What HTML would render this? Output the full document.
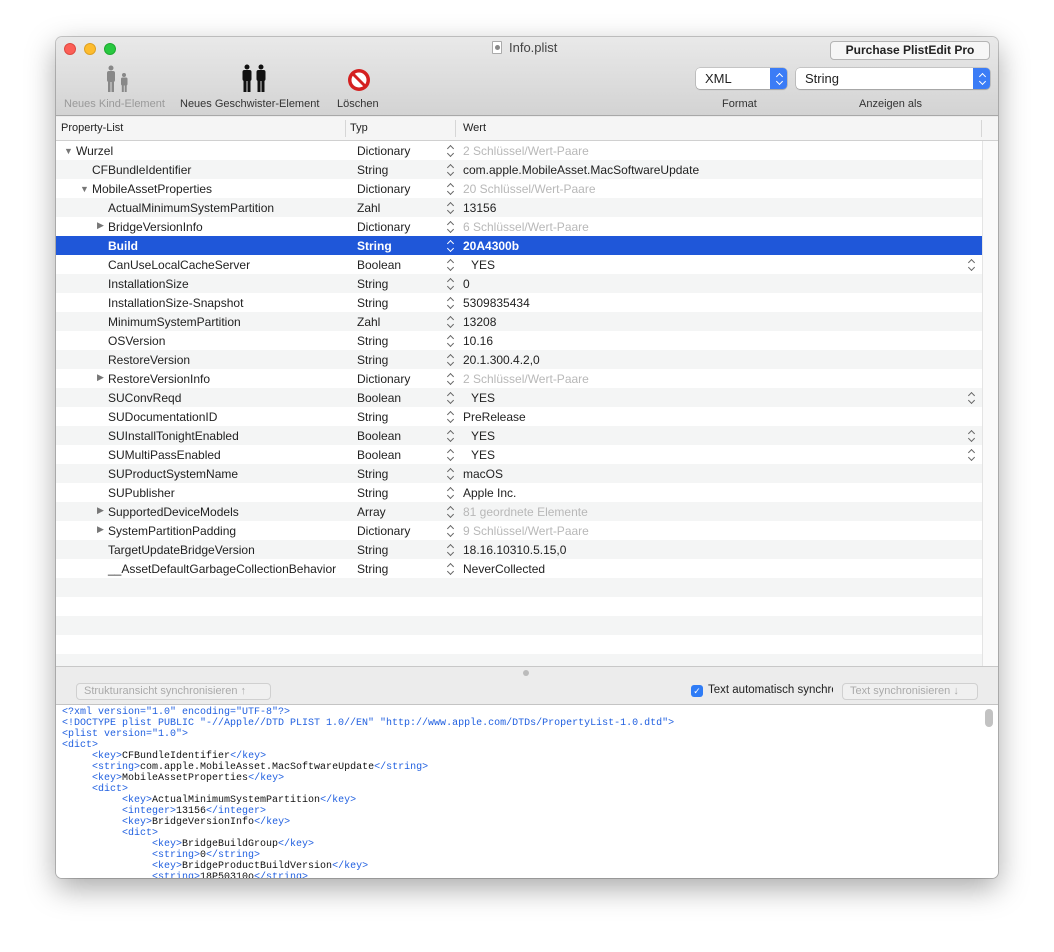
<!DOCTYPE html>
<html><head><meta charset="utf-8"><style>
*{box-sizing:border-box;margin:0;padding:0}
body{width:1054px;height:952px;background:#fff;font-family:"Liberation Sans",Arial,sans-serif;font-size:12px;color:#222;position:relative;overflow:hidden}
.win{position:absolute;left:56px;top:37px;width:942px;height:841px;border-radius:6px;overflow:hidden;box-shadow:0 10px 30px rgba(0,0,0,.35),0 0 0 1px rgba(0,0,0,.2);background:#ececec}
.tb{position:absolute;left:0;top:0;width:942px;height:79px;background:linear-gradient(#e9e9e9,#d3d3d3);border-bottom:1px solid #a8a8a8}
.dot{position:absolute;top:6px;width:12px;height:12px;border-radius:50%}
.abs{position:absolute}
.lbl{position:absolute;font-size:11px;color:#333;white-space:nowrap}
.pop{position:absolute;height:21px;background:#fff;border-radius:4px;box-shadow:0 0 0 .5px rgba(0,0,0,.25),0 1px 1px rgba(0,0,0,.15);font-size:13px;padding:3px 0 0 9px;color:#222}
.pop .ar{position:absolute;right:0;top:0;width:17px;height:21px;background:#3b7cf6;border-radius:0 4px 4px 0}
.s,.ar i{display:block}
.ch::before,.ch::after{content:"";position:absolute;width:4px;height:4px;transform:rotate(45deg)}
.ch::before{left:1.5px;top:2px;border-left:1px solid currentColor;border-top:1px solid currentColor}
.ch::after{left:1.5px;top:7px;border-right:1px solid currentColor;border-bottom:1px solid currentColor}
.pop .ar.ch{color:#fff}
.pop .ar.ch::before{left:6.5px;top:6px}
.pop .ar.ch::after{left:6.5px;top:11px}
.hdr{position:absolute;left:0;top:80px;width:942px;height:24px;background:#f5f5f5;border-bottom:1px solid #d0d0d0}
.hdr span{position:absolute;top:5px;font-size:11px;color:#222}
.hdr i{position:absolute;top:3px;width:1px;height:17px;background:#d6d6d6}
.tbl{position:absolute;left:0;top:104px;width:926px;height:525px;background:#fff}
.r{position:absolute;left:0;width:926px;height:19px;white-space:nowrap}
.r.g{background:#f4f5f5}
.r span{position:absolute;top:3px}
.r .t{left:301px}
.r .s{left:390px;top:3px;width:8px;height:13px;color:#666}
.r .v{left:407px}
.r .v.d{color:#b8b8b8}
.r .s2{left:911px;top:3px;width:8px;height:13px;color:#666}
.r.sel{background:#1f57d9;color:#fff;font-weight:bold}
.r.sel .s{color:#fff}
.tri{font-size:9px;color:#777}
.sb{position:absolute;left:926px;top:104px;width:16px;height:525px;background:#fafafa;border-left:1px solid #e4e4e4}
.split{position:absolute;left:0;top:629px;width:942px;height:40px;background:#ececec;border-top:1px solid #c8c8c8}
.btn{position:absolute;height:17px;border-radius:4px;border:1px solid #d0d0d0;background:#f0f0f0;color:#aaa;font-size:11px;padding:1px 7px}
.code{position:absolute;left:0;top:667px;width:942px;height:174px;background:#fff;border-top:1px solid #c4c4c4;font-family:"Liberation Mono",monospace;font-size:10px;line-height:11px;color:#111;padding:2px 0 0 6px;white-space:pre}
.code b{font-weight:normal;color:#2160e0}
</style></head><body>
<div class="win">
<div class="tb">
 <div class="dot" style="left:8px;background:#fc5f57;border:.5px solid #de4a41"></div>
 <div class="dot" style="left:28px;background:#fdbc2e;border:.5px solid #dea123"></div>
 <div class="dot" style="left:48px;background:#28c840;border:.5px solid #1ea930"></div>
 <div class="abs" style="left:436px;top:4px;width:10px;height:13px;background:#fff;border:1px solid #aaa;border-radius:1px"><div style="margin:3px auto;width:5px;height:5px;border-radius:50%;background:#888"></div></div>
 <div class="lbl" style="left:453px;top:3px;font-size:13px;color:#444">Info.plist</div>
 <div class="abs" style="left:774px;top:4px;width:160px;height:19px;background:#f6f6f6;border:1px solid #b4b4b4;border-radius:4px;font-weight:bold;font-size:12px;text-align:center;line-height:17px;color:#222">Purchase PlistEdit Pro</div>
 <svg class="abs" style="left:48px;top:28px" width="30" height="30" viewBox="0 0 30 30" fill="#888"><circle cx="7" cy="3" r="2.5"/><rect x="3" y="6" width="8" height="11" rx="2"/><rect x="4" y="14" width="2.5" height="13"/><rect x="7.5" y="14" width="2.5" height="13"/><circle cx="20" cy="10" r="2"/><rect x="17" y="12.5" width="6.5" height="8" rx="1.5"/><rect x="17.8" y="18" width="2" height="9"/><rect x="20.7" y="18" width="2" height="9"/></svg>
 <svg class="abs" style="left:184px;top:27px" width="30" height="30" viewBox="0 0 30 30" fill="#111"><circle cx="7" cy="3" r="2.5"/><rect x="2.5" y="6" width="9" height="11" rx="2"/><rect x="3.5" y="14" width="3" height="14"/><rect x="7.5" y="14" width="3" height="14"/><circle cx="21" cy="3" r="2.5"/><rect x="16.5" y="6" width="9" height="11" rx="2"/><rect x="17.5" y="14" width="3" height="14"/><rect x="21.5" y="14" width="3" height="14"/></svg>
 <svg class="abs" style="left:291px;top:31px" width="24" height="24" viewBox="0 0 24 24"><circle cx="12" cy="12" r="11" fill="#d42020"/><circle cx="12" cy="12" r="7.5" fill="#fff"/><path d="M6.5 6.5 L17.5 17.5" stroke="#d42020" stroke-width="3"/></svg>
 <div class="lbl" style="left:8px;top:61px;color:#999">Neues Kind-Element</div>
 <div class="lbl" style="left:124px;top:61px">Neues Geschwister-Element</div>
 <div class="lbl" style="left:281px;top:61px">Löschen</div>
 <div class="pop" style="left:640px;top:31px;width:91px">XML<div class="ar ch"></div></div>
 <div class="pop" style="left:740px;top:31px;width:194px">String<div class="ar ch"></div></div>
 <div class="lbl" style="left:666px;top:61px">Format</div>
 <div class="lbl" style="left:803px;top:61px">Anzeigen als</div>
</div>
<div class="hdr"><span style="left:5px">Property-List</span><i style="left:289px"></i><span style="left:294px">Typ</span><i style="left:399px"></i><span style="left:407px">Wert</span><i style="left:925px"></i></div>
<div class="tbl">
<div class="r" style="top:0"><span class="tri" style="left:8px;top:5px">▼</span><span style="left:20px">Wurzel</span><span class="t">Dictionary</span><span class="s ch"></span><span class="v d">2 Schlüssel/Wert-Paare</span></div>
<div class="r g" style="top:19px"><span style="left:36px">CFBundleIdentifier</span><span class="t">String</span><span class="s ch"></span><span class="v">com.apple.MobileAsset.MacSoftwareUpdate</span></div>
<div class="r" style="top:38px"><span class="tri" style="left:24px;top:5px">▼</span><span style="left:36px">MobileAssetProperties</span><span class="t">Dictionary</span><span class="s ch"></span><span class="v d">20 Schlüssel/Wert-Paare</span></div>
<div class="r g" style="top:57px"><span style="left:52px">ActualMinimumSystemPartition</span><span class="t">Zahl</span><span class="s ch"></span><span class="v">13156</span></div>
<div class="r" style="top:76px"><span class="tri" style="left:41px">▶</span><span style="left:52px">BridgeVersionInfo</span><span class="t">Dictionary</span><span class="s ch"></span><span class="v d">6 Schlüssel/Wert-Paare</span></div>
<div class="r sel" style="top:95px"><span style="left:52px">Build</span><span class="t">String</span><span class="s ch"></span><span class="v">20A4300b</span></div>
<div class="r" style="top:114px"><span style="left:52px">CanUseLocalCacheServer</span><span class="t">Boolean</span><span class="s ch"></span><span class="v" style="left:415px">YES</span><span class="s2 ch"></span></div>
<div class="r g" style="top:133px"><span style="left:52px">InstallationSize</span><span class="t">String</span><span class="s ch"></span><span class="v">0</span></div>
<div class="r" style="top:152px"><span style="left:52px">InstallationSize-Snapshot</span><span class="t">String</span><span class="s ch"></span><span class="v">5309835434</span></div>
<div class="r g" style="top:171px"><span style="left:52px">MinimumSystemPartition</span><span class="t">Zahl</span><span class="s ch"></span><span class="v">13208</span></div>
<div class="r" style="top:190px"><span style="left:52px">OSVersion</span><span class="t">String</span><span class="s ch"></span><span class="v">10.16</span></div>
<div class="r g" style="top:209px"><span style="left:52px">RestoreVersion</span><span class="t">String</span><span class="s ch"></span><span class="v">20.1.300.4.2,0</span></div>
<div class="r" style="top:228px"><span class="tri" style="left:41px">▶</span><span style="left:52px">RestoreVersionInfo</span><span class="t">Dictionary</span><span class="s ch"></span><span class="v d">2 Schlüssel/Wert-Paare</span></div>
<div class="r g" style="top:247px"><span style="left:52px">SUConvReqd</span><span class="t">Boolean</span><span class="s ch"></span><span class="v" style="left:415px">YES</span><span class="s2 ch"></span></div>
<div class="r" style="top:266px"><span style="left:52px">SUDocumentationID</span><span class="t">String</span><span class="s ch"></span><span class="v">PreRelease</span></div>
<div class="r g" style="top:285px"><span style="left:52px">SUInstallTonightEnabled</span><span class="t">Boolean</span><span class="s ch"></span><span class="v" style="left:415px">YES</span><span class="s2 ch"></span></div>
<div class="r" style="top:304px"><span style="left:52px">SUMultiPassEnabled</span><span class="t">Boolean</span><span class="s ch"></span><span class="v" style="left:415px">YES</span><span class="s2 ch"></span></div>
<div class="r g" style="top:323px"><span style="left:52px">SUProductSystemName</span><span class="t">String</span><span class="s ch"></span><span class="v">macOS</span></div>
<div class="r" style="top:342px"><span style="left:52px">SUPublisher</span><span class="t">String</span><span class="s ch"></span><span class="v">Apple Inc.</span></div>
<div class="r g" style="top:361px"><span class="tri" style="left:41px">▶</span><span style="left:52px">SupportedDeviceModels</span><span class="t">Array</span><span class="s ch"></span><span class="v d">81 geordnete Elemente</span></div>
<div class="r" style="top:380px"><span class="tri" style="left:41px">▶</span><span style="left:52px">SystemPartitionPadding</span><span class="t">Dictionary</span><span class="s ch"></span><span class="v d">9 Schlüssel/Wert-Paare</span></div>
<div class="r g" style="top:399px"><span style="left:52px">TargetUpdateBridgeVersion</span><span class="t">String</span><span class="s ch"></span><span class="v">18.16.10310.5.15,0</span></div>
<div class="r" style="top:418px"><span style="left:52px">__AssetDefaultGarbageCollectionBehavior</span><span class="t">String</span><span class="s ch"></span><span class="v">NeverCollected</span></div>
<div class="r g" style="top:437px"></div>
<div class="r g" style="top:475px"></div>
<div class="r g" style="top:513px"></div>
</div>
<div class="sb"></div>
<div class="split">
 <div class="abs" style="left:467px;top:3px;width:6px;height:6px;border-radius:50%;background:#bbb"></div>
 <div class="btn" style="left:20px;top:16px;width:195px">Strukturansicht synchronisieren ↑</div>
 <div class="abs" style="left:635px;top:18px;width:12px;height:12px;border-radius:3px;background:#2f7cf6;color:#fff;font-size:9px;text-align:center;line-height:12px">✓</div>
 <div class="lbl" style="left:652px;top:17px;font-size:11.5px;color:#222;width:125px;overflow:hidden">Text automatisch synchronisieren</div>
 <div class="btn" style="left:786px;top:16px;width:136px">Text synchronisieren ↓</div>
</div>
<div class="code"><b>&lt;?xml version="1.0" encoding="UTF-8"?&gt;</b>
<b>&lt;!DOCTYPE plist PUBLIC "-//Apple//DTD PLIST 1.0//EN" "http://www.apple.com/DTDs/PropertyList-1.0.dtd"&gt;</b>
<b>&lt;plist version="1.0"&gt;</b>
<b>&lt;dict&gt;</b>
     <b>&lt;key&gt;</b>CFBundleIdentifier<b>&lt;/key&gt;</b>
     <b>&lt;string&gt;</b>com.apple.MobileAsset.MacSoftwareUpdate<b>&lt;/string&gt;</b>
     <b>&lt;key&gt;</b>MobileAssetProperties<b>&lt;/key&gt;</b>
     <b>&lt;dict&gt;</b>
          <b>&lt;key&gt;</b>ActualMinimumSystemPartition<b>&lt;/key&gt;</b>
          <b>&lt;integer&gt;</b>13156<b>&lt;/integer&gt;</b>
          <b>&lt;key&gt;</b>BridgeVersionInfo<b>&lt;/key&gt;</b>
          <b>&lt;dict&gt;</b>
               <b>&lt;key&gt;</b>BridgeBuildGroup<b>&lt;/key&gt;</b>
               <b>&lt;string&gt;</b>0<b>&lt;/string&gt;</b>
               <b>&lt;key&gt;</b>BridgeProductBuildVersion<b>&lt;/key&gt;</b>
               <b>&lt;string&gt;</b>18P50310o<b>&lt;/string&gt;</b></div>
<div class="abs" style="left:929px;top:672px;width:8px;height:18px;border-radius:4px;background:#c2c2c2"></div>
</div>
</body></html>
